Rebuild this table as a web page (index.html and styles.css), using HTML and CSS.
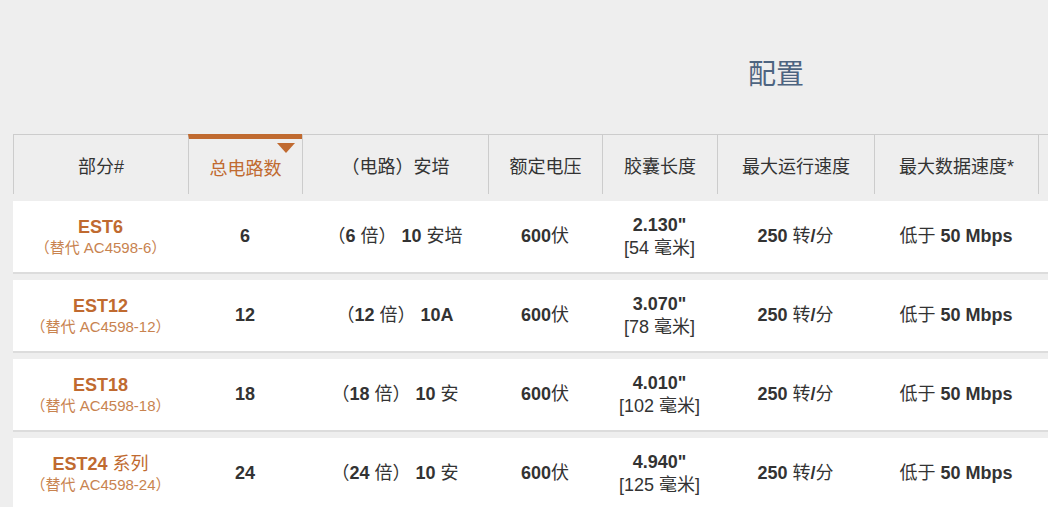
FILE: index.html
```html
<!DOCTYPE html>
<html lang="zh">
<head>
<meta charset="utf-8">
<title>配置</title>
<link rel="stylesheet" href="styles.css">
</head>
<body>
<div class="page">
  <h2 class="title">配置</h2>
  <div class="spec">
    <div class="head">
      <div class="hcell"><span>部分#</span></div>
      <div class="hcell sorted"><span>总电路数</span><span class="caret"></span></div>
      <div class="hcell"><span>（电路）安培</span></div>
      <div class="hcell"><span>额定电压</span></div>
      <div class="hcell"><span>胶囊长度</span></div>
      <div class="hcell"><span>最大运行速度</span></div>
      <div class="hcell"><span>最大数据速度*</span></div>
      <div class="hcell"></div>
      <div class="hcell"></div>
    </div>

    <div class="row">
      <div class="cell part"><span class="pn">EST6</span><span class="alt">（替代 AC4598-6）</span></div>
      <div class="cell"><span><b>6</b></span></div>
      <div class="cell"><span>（<b>6</b> 倍） <b>10</b> 安培</span></div>
      <div class="cell"><span><b>600</b>伏</span></div>
      <div class="cell stack"><b>2.130"</b><span>[54 毫米]</span></div>
      <div class="cell"><span><b>250</b> 转<b>/</b>分</span></div>
      <div class="cell"><span>低于 <b>50 Mbps</b></span></div>
      <div class="cell"></div>
      <div class="cell"></div>
    </div>

    <div class="row">
      <div class="cell part"><span class="pn">EST12</span><span class="alt">（替代 AC4598-12）</span></div>
      <div class="cell"><span><b>12</b></span></div>
      <div class="cell"><span>（<b>12</b> 倍） <b>10A</b></span></div>
      <div class="cell"><span><b>600</b>伏</span></div>
      <div class="cell stack"><b>3.070"</b><span>[78 毫米]</span></div>
      <div class="cell"><span><b>250</b> 转<b>/</b>分</span></div>
      <div class="cell"><span>低于 <b>50 Mbps</b></span></div>
      <div class="cell"></div>
      <div class="cell"></div>
    </div>

    <div class="row">
      <div class="cell part"><span class="pn">EST18</span><span class="alt">（替代 AC4598-18）</span></div>
      <div class="cell"><span><b>18</b></span></div>
      <div class="cell"><span>（<b>18</b> 倍） <b>10</b> 安</span></div>
      <div class="cell"><span><b>600</b>伏</span></div>
      <div class="cell stack"><b>4.010"</b><span>[102 毫米]</span></div>
      <div class="cell"><span><b>250</b> 转<b>/</b>分</span></div>
      <div class="cell"><span>低于 <b>50 Mbps</b></span></div>
      <div class="cell"></div>
      <div class="cell"></div>
    </div>

    <div class="row">
      <div class="cell part"><span class="pn">EST24 <span class="light">系列</span></span><span class="alt">（替代 AC4598-24）</span></div>
      <div class="cell"><span><b>24</b></span></div>
      <div class="cell"><span>（<b>24</b> 倍） <b>10</b> 安</span></div>
      <div class="cell"><span><b>600</b>伏</span></div>
      <div class="cell stack"><b>4.940"</b><span>[125 毫米]</span></div>
      <div class="cell"><span><b>250</b> 转<b>/</b>分</span></div>
      <div class="cell"><span>低于 <b>50 Mbps</b></span></div>
      <div class="cell"></div>
      <div class="cell"></div>
    </div>
  </div>
</div>
</body>
</html>
```

FILE: styles.css
```css
html, body {
  margin: 0;
  padding: 0;
}

body {
  background: #eeeeee;
  overflow: hidden;
  font-family: "Liberation Sans", "Noto Sans CJK SC", sans-serif;
  color: #333333;
}

.page {
  width: 1526px;
  margin-left: 13px;
}

.title {
  margin: 0;
  padding-top: 55px;
  margin-bottom: 39px;
  height: 40px;
  line-height: 40px;
  font-size: 28px;
  font-weight: normal;
  text-align: center;
  color: #4d6480;
}

.head,
.row {
  display: grid;
  grid-template-columns: 175px 114px 186px 114px 115px 157px 164px 250px 251px;
}

.head {
  margin-bottom: 7px;
}

.hcell {
  position: relative;
  box-sizing: border-box;
  height: 60px;
  border-top: 1px solid #cccccc;
  border-left: 1px solid #cccccc;
  display: flex;
  align-items: center;
  justify-content: center;
  font-size: 18px;
  color: #333333;
}

.hcell.sorted {
  border-top: 5px solid #c06a30;
  color: #c06a30;
}

.caret {
  position: absolute;
  top: 4px;
  right: 7px;
  width: 0;
  height: 0;
  border-left: 9px solid transparent;
  border-right: 9px solid transparent;
  border-top: 10px solid #c06a30;
}

.row {
  background: #ffffff;
  height: 71px;
  border-bottom: 2px solid #dcdcdc;
  margin-bottom: 6px;
}

.cell {
  display: flex;
  align-items: center;
  justify-content: center;
  font-size: 18px;
  line-height: 23px;
  color: #333333;
  white-space: nowrap;
}

.cell b {
  font-weight: bold;
}

.stack {
  flex-direction: column;
}

.part {
  flex-direction: column;
}

.pn {
  font-weight: bold;
  color: #c06a30;
  line-height: 22px;
}

.pn .light {
  font-weight: normal;
}

.alt {
  font-size: 15px;
  line-height: 20px;
  color: #c8834f;
}
```
